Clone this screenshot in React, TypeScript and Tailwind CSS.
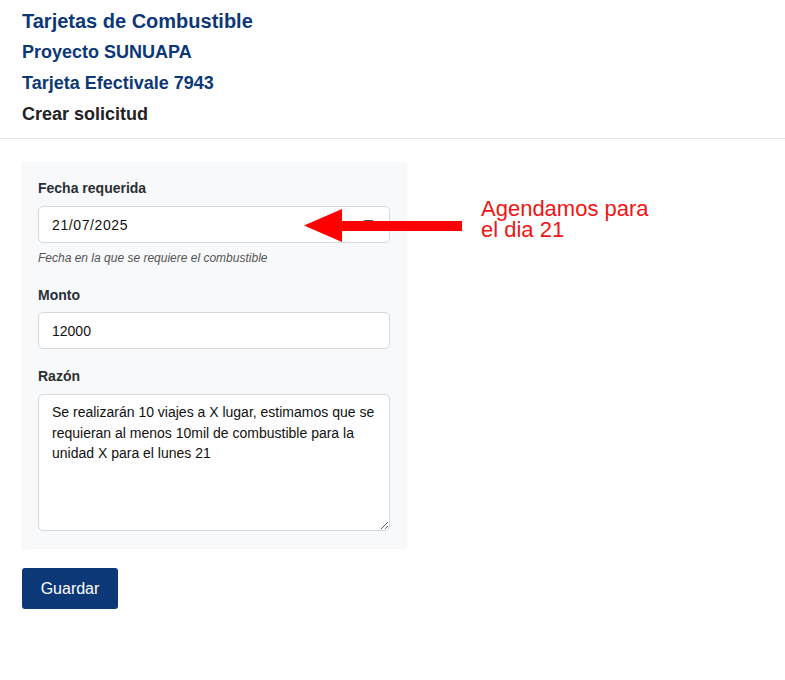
import React from "react";

export default function App() {
  return (
    <div className="min-h-[680px] bg-white text-[#212529]" style={{ fontFamily: '"Liberation Sans", Arial, sans-serif' }}>
      <div className="border-b border-[#e2e4e7] px-[22px] pt-[9px] pb-[12px]">
        <h1 className="text-[20px] font-bold leading-[24px] text-[#0d3878]">Tarjetas de Combustible</h1>
        <h2 className="mt-[7px] text-[18px] font-bold leading-[24px] text-[#0d3878]">Proyecto SUNUAPA</h2>
        <h2 className="mt-[7px] text-[18px] font-bold leading-[24px] text-[#0d3878]">Tarjeta Efectivale 7943</h2>
        <h2 className="mt-[7px] text-[18px] font-bold leading-[24px] text-[#222]">Crear solicitud</h2>
      </div>
      <div className="px-[22px] pt-[23px]">
        <div className="relative w-[384px] bg-[#f8f9fa] px-[16px] pt-[16px] pb-[16px] shadow-[0_1px_3px_rgba(0,0,0,0.06)]">
          <label className="block text-[14px] font-bold leading-[20px] text-[#2b2f33]">Fecha requerida</label>
          <div className="relative mt-[8px]">
            <input
              readOnly
              value="21/07/2025"
              className="h-[37px] w-full rounded-[5px] border border-[#d6d9dc] bg-white px-[13px] text-[14px] tracking-[0.6px] text-[#111] outline-none"
            />
            <svg className="absolute right-[16px] top-[13px]" width="11" height="11" viewBox="0 0 11 11">
              <rect x="0.5" y="1.5" width="10" height="9" rx="1" fill="none" stroke="#555" />
              <line x1="0.5" y1="4" x2="10.5" y2="4" stroke="#555" />
            </svg>
          </div>
          <p className="mt-[8px] text-[12px] italic leading-[15px] text-[#555]">Fecha en la que se requiere el combustible</p>
          <label className="mt-[19px] block text-[14px] font-bold leading-[20px] text-[#2b2f33]">Monto</label>
          <input
            readOnly
            value="12000"
            className="mt-[7px] h-[37px] w-full rounded-[5px] border border-[#d6d9dc] bg-white px-[13px] text-[14px] text-[#111] outline-none"
          />
          <label className="mt-[17px] block text-[14px] font-bold leading-[20px] text-[#2b2f33]">Razón</label>
          <textarea
            readOnly
            value="Se realizarán 10 viajes a X lugar, estimamos que se requieran al menos 10mil de combustible para la unidad X para el lunes 21"
            className="mt-[8px] block h-[137px] w-full resize-y rounded-[5px] border border-[#d6d9dc] bg-white px-[13px] py-[7px] text-[14px] leading-[20.5px] text-[#111] outline-none"
          />
        </div>
        <button className="mt-[21px] h-[41px] w-[96px] rounded-[3px] bg-[#0d3878] text-[16px] text-white">Guardar</button>
      </div>

      <div className="absolute left-[304px] top-[209px]">
        <svg width="160" height="33" viewBox="0 0 160 33">
          <polygon points="0,16.5 38,0 38,12 158,12 158,22 38,22 38,33" fill="#ff0000" />
        </svg>
      </div>
      <div className="absolute left-[481px] top-[198px] text-[22px] leading-[21px] text-[#f01515]">
        <div>Agendamos para</div>
        <div>el dia 21</div>
      </div>
    </div>
  );
}
